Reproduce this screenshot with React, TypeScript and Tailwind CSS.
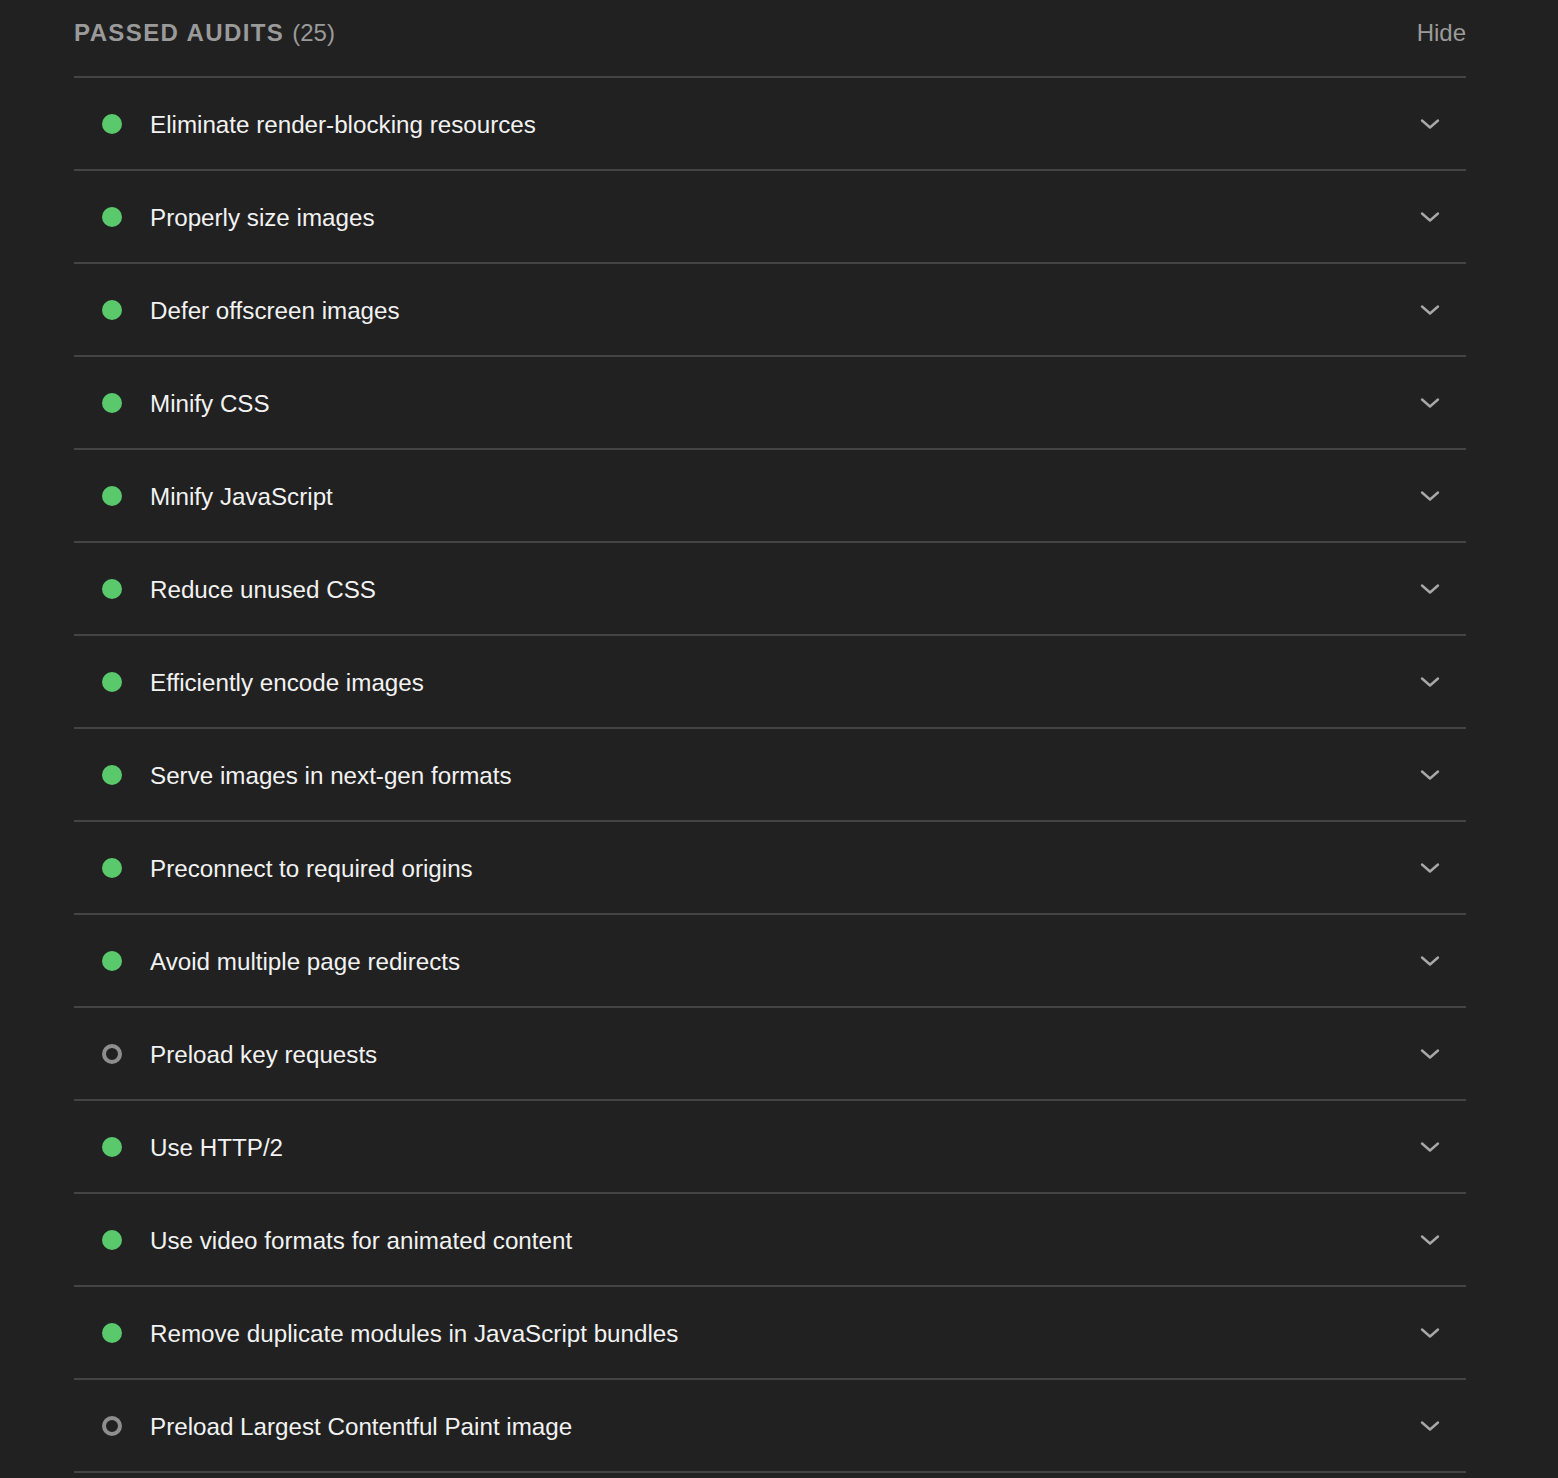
import React from "react";

const audits: { title: string; pass: boolean }[] = [
  { title: "Eliminate render-blocking resources", pass: true },
  { title: "Properly size images", pass: true },
  { title: "Defer offscreen images", pass: true },
  { title: "Minify CSS", pass: true },
  { title: "Minify JavaScript", pass: true },
  { title: "Reduce unused CSS", pass: true },
  { title: "Efficiently encode images", pass: true },
  { title: "Serve images in next-gen formats", pass: true },
  { title: "Preconnect to required origins", pass: true },
  { title: "Avoid multiple page redirects", pass: true },
  { title: "Preload key requests", pass: false },
  { title: "Use HTTP/2", pass: true },
  { title: "Use video formats for animated content", pass: true },
  { title: "Remove duplicate modules in JavaScript bundles", pass: true },
  { title: "Preload Largest Contentful Paint image", pass: false },
];

function Chevron() {
  return (
    <svg width="20" height="12" viewBox="0 0 20 12" fill="none">
      <path d="M2 2.5 L10 9.5 L18 2.5" stroke="#a8a8a8" strokeWidth="2.4" strokeLinecap="round" strokeLinejoin="round" />
    </svg>
  );
}

export default function App() {
  return (
    <div className="min-h-[1478px] w-full bg-[#212121]" style={{ fontFamily: '"Liberation Sans", Arial, sans-serif' }}>
      <div className="mx-[74px] w-[1392px]">
        <div className="flex h-[76px] items-start justify-between pt-[17px]">
          <div className="text-[24px] leading-[32px] text-[#9a9a9a]">
            <span className="font-bold tracking-[1.4px]">PASSED AUDITS</span>
            <span className="ml-[8px]">(25)</span>
          </div>
          <div className="text-[24px] leading-[32px] text-[#9a9a9a]">Hide</div>
        </div>
        {audits.map((a) => (
          <div key={a.title} className="flex h-[93px] items-center border-t-2 border-[#444444] last:h-[95px] last:border-b-2">
            <div className="ml-[28px] flex h-[20px] w-[20px] items-center justify-center">
              {a.pass ? (
                <div className="h-[20px] w-[20px] rounded-full bg-[#59c96c]" />
              ) : (
                <div className="h-[20px] w-[20px] rounded-full border-[4px] border-[#8e8e8e]" />
              )}
            </div>
            <div className="ml-[28px] flex-1 pt-[2px] text-[24.2px] leading-[32px] text-[#f2f2f2]">{a.title}</div>
            <div className="mr-[26px] flex items-center">
              <Chevron />
            </div>
          </div>
        ))}
      </div>
    </div>
  );
}
